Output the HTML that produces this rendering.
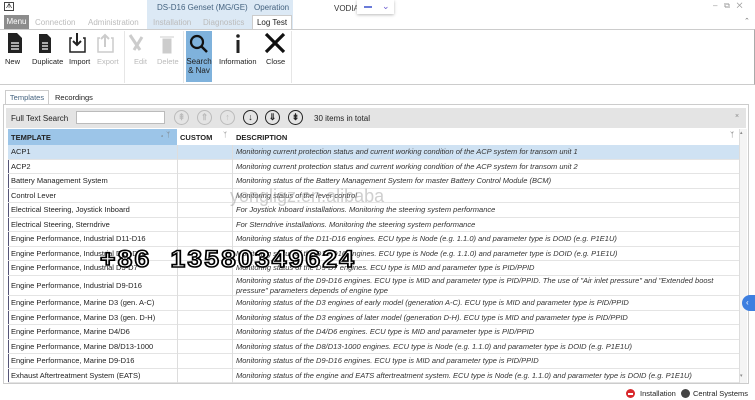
<!DOCTYPE html>
<html><head><style>
*{margin:0;padding:0;box-sizing:border-box}
body{width:755px;height:400px;overflow:hidden;background:#fff;font-family:"Liberation Sans",sans-serif;font-size:8px;color:#222;position:relative}
.a{position:absolute}
.tt{font-size:8px;color:#bbb}
.btn{position:absolute;top:33px;text-align:center;font-size:7.5px;color:#222}
.btn.d{color:#bbb}
.row{position:absolute;left:8px;width:731px;height:14.5px;border-bottom:1px solid #e4e4e4;font-size:7.5px;line-height:14px}
.row .t{position:absolute;left:3px}
.row .c{position:absolute;left:169px;top:0;bottom:-1px;border-left:1px solid #ddd}
.row .dd{position:absolute;left:224px;top:0;bottom:-1px;border-left:1px solid #ddd;padding-left:3px;font-style:italic;color:#333;white-space:nowrap}
.circ{position:absolute;top:110px;width:15px;height:15px;border-radius:50%;border:1.5px solid #222;font-size:9px;text-align:center;line-height:12px;font-weight:bold}
</style></head><body>
<div class="a" style="left:4px;top:2px;width:10px;height:9px;border:1px solid #444;font-size:7px;line-height:7px;text-align:center">ᗑ</div>
<div class="a" style="left:147px;top:0;width:146px;height:29px;background:#dce9f5"></div>
<div class="a" style="left:157px;top:3px;color:#44627f;font-size:8px">DS-D16 Genset (MG/GE)</div>
<div class="a" style="left:254px;top:3px;color:#44627f;font-size:8px">Operation</div>
<div class="a" style="left:334px;top:4px;font-size:8px;color:#333">VODIA</div>
<div class="a" style="left:357px;top:0;width:37px;height:14px;background:#fff;box-shadow:0 1px 3px #bbb"></div>
<div class="a" style="left:364px;top:6px;width:8px;height:1.5px;background:#6a7bd8"></div>
<div class="a" style="left:382px;top:1px;color:#6a5bd0;font-size:9px">⌄</div>
<div class="a" style="left:713px;top:1px;color:#999;font-size:8px">–&nbsp;&nbsp;&nbsp;⧉&nbsp;&nbsp;&nbsp;✕</div>
<div class="a" style="left:744px;top:17px;color:#777;font-size:7px">⌃</div>
<div class="a" style="left:4px;top:15px;width:25px;height:14px;background:#8c8c8c;color:#fff;font-size:8px;line-height:14px;text-align:center">Menu</div>
<div class="a tt" style="left:35px;top:18px">Connection</div>
<div class="a tt" style="left:88px;top:18px">Administration</div>
<div class="a tt" style="left:153px;top:18px">Installation</div>
<div class="a tt" style="left:203px;top:18px">Diagnostics</div>
<div class="a" style="left:252px;top:15px;width:40px;height:15px;background:#fff;border:1px solid #ccc;border-bottom:none;font-size:8px;line-height:14px;text-align:center">Log Test</div>
<div class="a" style="left:0;top:29px;width:755px;height:56px;border-top:1px solid #ccc;border-bottom:1px solid #ccc;border-right:1px solid #aaa"></div>
<div class="a" style="left:124px;top:31px;width:1px;height:52px;background:#e6e6e6"></div>
<div class="a" style="left:183px;top:31px;width:1px;height:52px;background:#e6e6e6"></div>
<div class="a" style="left:291px;top:31px;width:1px;height:52px;background:#e6e6e6"></div>
<div class="a" style="left:186px;top:31px;width:26px;height:51px;background:#7fb2dc"></div>
<svg class="a" style="left:0;top:31px" width="300" height="30">
<path d="M8 2h9l5 5v15H8z" fill="#222"/><path d="M11 12h8M11 15h8M11 18h8" stroke="#fff" stroke-width="1.3"/>
<path d="M39 3h8l4 4v15H39z" fill="#222"/><path d="M42 12h6M42 15h6M42 18h6" stroke="#fff" stroke-width="1.3"/>
<path d="M72 7h-2v14h15V7h-2" fill="none" stroke="#222" stroke-width="1.5"/><path d="M77 2v12M73 10l4 4 4-4" fill="none" stroke="#222" stroke-width="2"/>
<path d="M100 7h-2v14h15V7h-2" fill="none" stroke="#ccc" stroke-width="1.5"/><path d="M105 16V4M101 8l4-4 4 4" fill="none" stroke="#ccc" stroke-width="2"/>
<path d="M130 4l10 15M142 6l-8 13" stroke="#ccc" stroke-width="3"/>
<path d="M160 6h14M163 8h8v14h-8z" fill="#ccc" stroke="#ccc"/>
<circle cx="197" cy="11" r="6" fill="none" stroke="#111" stroke-width="2.2"/><path d="M201 15l6 6" stroke="#111" stroke-width="2.5"/>
<circle cx="238" cy="5" r="1.8" fill="#222"/><path d="M238 9v13" stroke="#222" stroke-width="3"/>
<path d="M266 3l18 18M284 3l-18 18" stroke="#111" stroke-width="3.2"/>
</svg>
<div class="btn" style="left:5px;top:57px">New</div>
<div class="btn" style="left:32px;top:57px">Duplicate</div>
<div class="btn" style="left:69px;top:57px">Import</div>
<div class="btn d" style="left:97px;top:57px">Export</div>
<div class="btn d" style="left:134px;top:57px">Edit</div>
<div class="btn d" style="left:157px;top:57px">Delete</div>
<div class="btn" style="left:186px;top:57px;width:26px;line-height:9px;font-size:8px">Search<br>&amp; Nav</div>
<div class="btn" style="left:219px;top:57px">Information</div>
<div class="btn" style="left:266px;top:57px">Close</div>
<div class="a" style="left:5px;top:90px;width:44px;height:15px;border:1px solid #ccc;border-bottom:none;background:#fff;font-size:7.5px;line-height:14px;text-align:center;color:#44627f">Templates</div>
<div class="a" style="left:55px;top:93px;font-size:7.5px">Recordings</div>
<div class="a" style="left:3px;top:104px;width:746px;height:280px;border:1px solid #ccc"></div>
<div class="a" style="left:6px;top:108px;width:740px;height:20px;background:#e4e4e4"></div>
<div class="a" style="left:11px;top:114px;font-size:8px">Full Text Search</div>
<div class="a" style="left:76px;top:111px;width:89px;height:13px;background:#fff;border:1px solid #bbb"></div>
<div class="circ" style="left:174px;border-color:#bbb;color:#bbb">⇞</div>
<div class="circ" style="left:197px;border-color:#bbb;color:#bbb">⇑</div>
<div class="circ" style="left:220px;border-color:#bbb;color:#bbb">↑</div>
<div class="circ" style="left:243px">↓</div>
<div class="circ" style="left:265px">⇓</div>
<div class="circ" style="left:288px">⇟</div>
<div class="a" style="left:314px;top:114px;font-size:8px">30 items in total</div>
<div class="a" style="left:735px;top:113px;color:#888;font-size:7px">×</div>
<div class="a" style="left:8px;top:129px;width:169px;height:16px;background:#9cc5e8"></div>
<div class="a" style="left:11px;top:133px;font-weight:bold;font-size:7.5px">TEMPLATE</div>
<div class="a" style="left:160px;top:132px;font-size:7px;color:#777">▴ ᛉ</div>
<div class="a" style="left:180px;top:133px;font-weight:bold;font-size:7.5px">CUSTOM</div>
<div class="a" style="left:223px;top:132px;font-size:7px;color:#777">ᛉ</div>
<div class="a" style="left:236px;top:133px;font-weight:bold;font-size:7.5px">DESCRIPTION</div>
<div class="a" style="left:730px;top:132px;font-size:7px;color:#555">ᛉ</div>
<div class="a" style="left:739px;top:129px;width:8px;height:254px;border-left:1px solid #ddd;background:#f4f4f4"></div>
<div class="a" style="left:740px;top:130px;font-size:5px;color:#888">▴</div>
<div class="a" style="left:740px;top:373px;font-size:5px;color:#888">▾</div>
<div class="a" style="left:8px;top:145px;width:1px;height:238px;background:#557"></div>
<div class="row" style="top:145px;background:#cfe2f3"><span class="t">ACP1</span><span class="c"></span><span class="dd">Monitoring current protection status and current working condition of the ACP system for transom unit 1</span></div>
<div class="row" style="top:159.5px"><span class="t">ACP2</span><span class="c"></span><span class="dd">Monitoring current protection status and current working condition of the ACP system for transom unit 2</span></div>
<div class="row" style="top:174px"><span class="t">Battery Management System</span><span class="c"></span><span class="dd">Monitoring status of the Battery Management System for master Battery Control Module (BCM)</span></div>
<div class="row" style="top:188.5px"><span class="t">Control Lever</span><span class="c"></span><span class="dd">Monitoring status of the lever control</span></div>
<div class="row" style="top:203px"><span class="t">Electrical Steering, Joystick Inboard</span><span class="c"></span><span class="dd">For Joystick Inboard installations. Monitoring the steering system performance</span></div>
<div class="row" style="top:217.5px"><span class="t">Electrical Steering, Sterndrive</span><span class="c"></span><span class="dd">For Sterndrive installations. Monitoring the steering system performance</span></div>
<div class="row" style="top:232px"><span class="t">Engine Performance, Industrial D11-D16</span><span class="c"></span><span class="dd">Monitoring status of the D11-D16 engines. ECU type is Node (e.g. 1.1.0) and parameter type is DOID (e.g. P1E1U)</span></div>
<div class="row" style="top:246.5px"><span class="t">Engine Performance, Industrial D13-D16</span><span class="c"></span><span class="dd">Monitoring status of the D13-D16 engines. ECU type is Node (e.g. 1.1.0) and parameter type is DOID (e.g. P1E1U)</span></div>
<div class="row" style="top:261px"><span class="t">Engine Performance, Industrial D5-D7</span><span class="c"></span><span class="dd">Monitoring status of the D5-D7 engines. ECU type is MID and parameter type is PID/PPID</span></div>
<div class="row" style="top:275.5px;height:20px"><span class="t" style="top:3px">Engine Performance, Industrial D9-D16</span><span class="c"></span><span class="dd" style="line-height:10px;padding-top:0">Monitoring status of the D9-D16 engines. ECU type is MID and parameter type is PID/PPID. The use of "Air inlet pressure" and "Extended boost<br>pressure" parameters depends of engine type</span></div>
<div class="row" style="top:296px"><span class="t">Engine Performance, Marine D3 (gen. A-C)</span><span class="c"></span><span class="dd">Monitoring status of the D3 engines of early model (generation A-C). ECU type is MID and parameter type is PID/PPID</span></div>
<div class="row" style="top:310.5px"><span class="t">Engine Performance, Marine D3 (gen. D-H)</span><span class="c"></span><span class="dd">Monitoring status of the D3 engines of later model (generation D-H). ECU type is MID and parameter type is PID/PPID</span></div>
<div class="row" style="top:325px"><span class="t">Engine Performance, Marine D4/D6</span><span class="c"></span><span class="dd">Monitoring status of the D4/D6 engines. ECU type is MID and parameter type is PID/PPID</span></div>
<div class="row" style="top:339.5px"><span class="t">Engine Performance, Marine D8/D13-1000</span><span class="c"></span><span class="dd">Monitoring status of the D8/D13-1000 engines. ECU type is Node (e.g. 1.1.0) and parameter type is DOID (e.g. P1E1U)</span></div>
<div class="row" style="top:354px"><span class="t">Engine Performance, Marine D9-D16</span><span class="c"></span><span class="dd">Monitoring status of the D9-D16 engines. ECU type is MID and parameter type is PID/PPID</span></div>
<div class="row" style="top:368.5px"><span class="t">Exhaust Aftertreatment System (EATS)</span><span class="c"></span><span class="dd">Monitoring status of the engine and EATS aftertreatment system. ECU type is Node (e.g. 1.1.0) and parameter type is DOID (e.g. P1E1U)</span></div>
<div class="a" style="left:230px;top:186px;font-size:18px;color:rgba(160,160,160,.5)">yongligz.en.alibaba</div>
<div class="a" style="left:100px;top:246px;font-size:24px;font-weight:bold;color:#fff;-webkit-text-stroke:1.6px #000;letter-spacing:2px;white-space:nowrap;transform:scaleX(1.1);transform-origin:left top">+86&nbsp;&nbsp;13580349624</div>
<div class="a" style="left:742px;top:295px;width:14px;height:16px;border-radius:8px 0 0 8px;background:#3d7fe0;color:#fff;font-size:8px;line-height:16px;padding-left:4px">‹</div>
<div class="a" style="left:626px;top:389px;width:9px;height:9px;border-radius:50%;background:#d8282c"></div>
<div class="a" style="left:628px;top:393px;width:5px;height:1.5px;background:#fff"></div>
<div class="a" style="left:640px;top:389px;font-size:7.5px">Installation</div>
<div class="a" style="left:681px;top:389px;width:9px;height:9px;border-radius:50%;background:#444"></div>
<div class="a" style="left:693px;top:389px;font-size:7.5px">Central Systems</div>
</body></html>
